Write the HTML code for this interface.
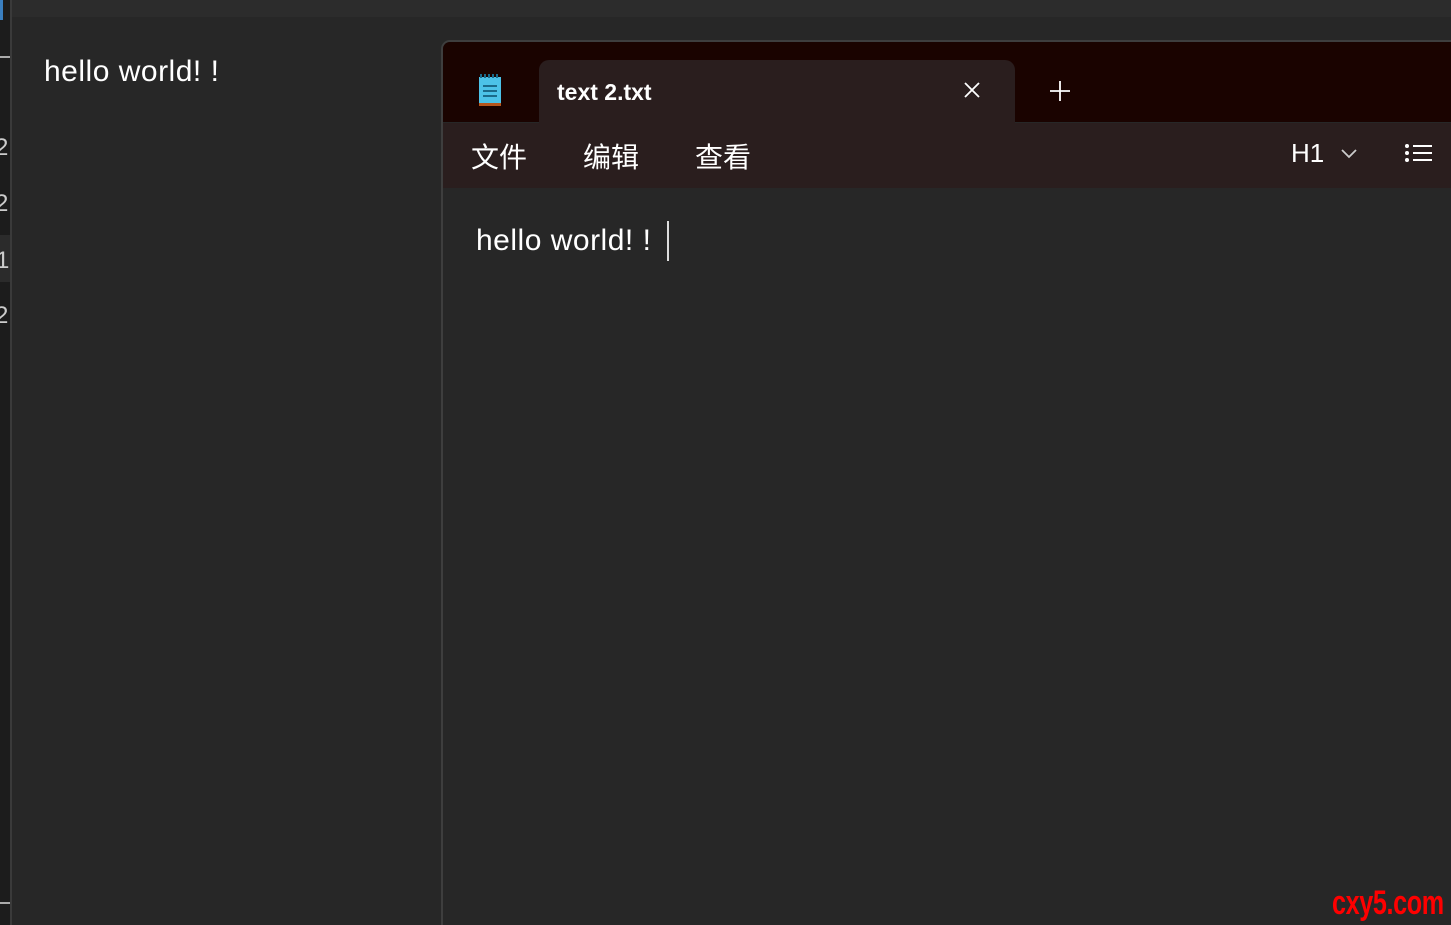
<!DOCTYPE html>
<html><head><meta charset="utf-8"><style>
*{margin:0;padding:0;box-sizing:border-box}
html,body{width:1451px;height:925px;overflow:hidden}
body{background:#272727;font-family:"Liberation Sans","Noto Sans CJK SC",sans-serif;color:#fff;position:relative}
.abs{position:absolute}
</style></head><body>
<div class="abs" style="left:0;top:0;width:1451px;height:17px;background:#2c2c2c"></div>
<div class="abs" style="left:0;top:0;width:10px;height:925px;background:#1c1c1c"></div>
<div class="abs" style="left:10px;top:0;width:2px;height:925px;background:#3a3a3a"></div>
<div class="abs" style="left:0;top:0;width:3px;height:20px;background:#3a7fc0"></div>
<div class="abs" style="left:0;top:56px;width:10px;height:2px;background:#aaa"></div>
<div class="abs" style="left:0;top:235px;width:10px;height:47px;background:#2b2b2b"></div>
<div class="abs" style="left:0;top:902px;width:10px;height:2px;background:#aaa"></div>
<div class="abs" style="left:-5px;top:134px;font-size:24px;color:#ccc">2</div>
<div class="abs" style="left:-5px;top:190px;font-size:24px;color:#ccc">2</div>
<div class="abs" style="left:-4px;top:247px;font-size:24px;color:#ccc">1</div>
<div class="abs" style="left:-5px;top:302px;font-size:24px;color:#ccc">2</div>
<div class="abs" style="left:44px;top:55px;font-size:30px;letter-spacing:0.5px;white-space:pre">hello world! !</div>

<div class="abs" style="left:441px;top:40px;width:1030px;height:900px;border:2px solid #3e3e3e;border-radius:9px;background:#272727;overflow:hidden">
 <div class="abs" style="left:0;top:0;width:100%;height:80px;background:#1a0300"></div>
 <svg class="abs" style="left:34px;top:32px" width="26" height="34" viewBox="0 0 26 34">
  <rect x="2" y="3" width="22" height="28" fill="#4cc2e8"/>
  <rect x="2" y="29" width="22" height="3" fill="#b5561e"/>
  <g fill="#1a6a8a"><rect x="3" y="0" width="2" height="4"/><rect x="7" y="0" width="2" height="4"/><rect x="11" y="0" width="2" height="4"/><rect x="15" y="0" width="2" height="4"/><rect x="19" y="0" width="2" height="4"/>
  <rect x="6" y="11" width="14" height="2"/><rect x="6" y="16" width="14" height="2"/><rect x="6" y="21" width="14" height="2"/></g>
 </svg>
 <div class="abs" style="left:96px;top:18px;width:476px;height:70px;background:#2a1e1e;border-radius:10px 10px 0 0"></div>
 <div class="abs" style="left:114px;top:37px;font-size:23px;font-weight:bold">text 2.txt</div>
 <svg class="abs" style="left:519px;top:38px" width="20" height="20"><path d="M3 3L17 17M17 3L3 17" stroke="#fff" stroke-width="1.8"/></svg>
 <svg class="abs" style="left:606px;top:38px" width="22" height="22"><path d="M11 1V21M1 11H21" stroke="#fff" stroke-width="1.8"/></svg>
 <div class="abs" style="left:0;top:81px;width:100%;height:65px;background:#2a1e1e"></div>
 <div class="abs" style="left:28px;top:94px;font-size:28px">文件</div>
 <div class="abs" style="left:140px;top:94px;font-size:28px">编辑</div>
 <div class="abs" style="left:252px;top:94px;font-size:28px">查看</div>
 <div class="abs" style="left:848px;top:96px;font-size:26px">H1</div>
 <svg class="abs" style="left:897px;top:106px" width="18" height="12"><path d="M2 2L9 9L16 2" stroke="#ccc" stroke-width="1.8" fill="none"/></svg>
 <svg class="abs" style="left:961px;top:101px" width="30" height="22"><g fill="#fff"><circle cx="3" cy="3" r="2"/><circle cx="3" cy="10" r="2"/><circle cx="3" cy="17" r="2"/><rect x="9" y="2" width="19" height="2"/><rect x="9" y="9" width="19" height="2"/><rect x="9" y="16" width="19" height="2"/></g></svg>
 <div class="abs" style="left:33px;top:182px;font-size:30px;letter-spacing:0.5px;white-space:pre">hello world! !</div>
 <div class="abs" style="left:224px;top:179px;width:2px;height:40px;background:#ddd"></div>
</div>
<div class="abs" style="left:1332px;top:884px;font-size:34px;font-weight:bold;color:#f00;transform:scaleX(0.74);transform-origin:left;letter-spacing:-0.5px">cxy5.com</div>
</body></html>
